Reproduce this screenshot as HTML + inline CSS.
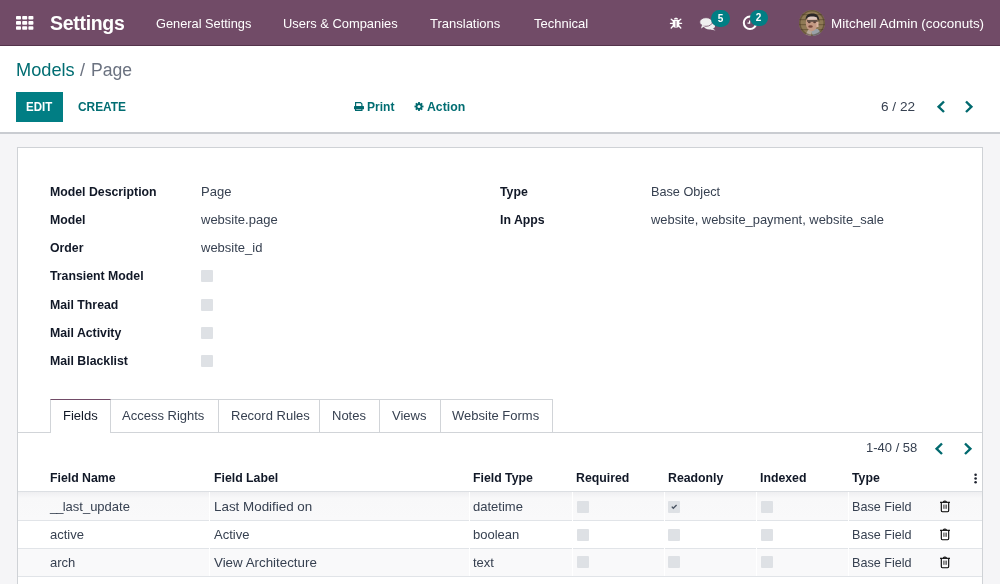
<!DOCTYPE html>
<html><head><meta charset="utf-8">
<style>
*{box-sizing:border-box;margin:0;padding:0}
html,body{width:1000px;height:584px;overflow:hidden;background:#fff;font-family:"Liberation Sans",sans-serif;color:#374151}
.a{position:absolute;white-space:nowrap;line-height:16px}
#nav{position:absolute;left:0;top:0;width:1000px;height:46px;background:#714b67;border-bottom:1px solid #54334b}
#nav .a{color:#fff;font-size:13px}
#cp{position:absolute;left:0;top:46px;width:1000px;height:87px;background:#fff}
#cpline{position:absolute;left:0;top:132px;width:1000px;height:2px;background:#c9ccd1}
#bg{position:absolute;left:0;top:134px;width:1000px;height:450px;background:#f5f5f7}
#sheet{position:absolute;left:17px;top:147px;width:966px;height:460px;background:#fff;border:1px solid #cfd2d6}
.lb{font-weight:bold;color:#111827;font-size:12.3px}
.vl{color:#374151;font-size:13px}
.cb{position:absolute;width:12px;height:12px;background:#dee1e5;border-radius:1px}
.tab{position:absolute;top:399px;height:33px;border:1px solid #d1d4d8;border-bottom:none;background:#fff}
.tt{position:absolute;z-index:2;top:408px;font-size:13px;color:#374151;white-space:nowrap;line-height:16px}
.th{font-weight:bold;color:#111827;font-size:12.3px}
.sep{position:absolute;width:1px;background:#fff}
.hl{position:absolute;left:18px;width:964px;height:1px;background:#e1e4e8}
</style></head>
<body>
<div id="root" style="position:absolute;left:0;top:0;width:1000px;height:584px;will-change:transform">
<!-- NAVBAR -->
<div id="nav">
  <svg style="position:absolute;left:16px;top:16px" width="18" height="14" viewBox="0 0 18 14">
    <g fill="#fff">
      <rect x="0" y="0" width="5" height="3.6" rx="0.8"/><rect x="6.2" y="0" width="5" height="3.6" rx="0.8"/><rect x="12.4" y="0" width="5" height="3.6" rx="0.8"/>
      <rect x="0" y="5.1" width="5" height="3.6" rx="0.8"/><rect x="6.2" y="5.1" width="5" height="3.6" rx="0.8"/><rect x="12.4" y="5.1" width="5" height="3.6" rx="0.8"/>
      <rect x="0" y="10.2" width="5" height="3.6" rx="0.8"/><rect x="6.2" y="10.2" width="5" height="3.6" rx="0.8"/><rect x="12.4" y="10.2" width="5" height="3.6" rx="0.8"/>
    </g>
  </svg>
  <div class="a" style="left:50px;top:12px;font-size:19.5px;line-height:22px;font-weight:bold;letter-spacing:-0.3px">Settings</div>
  <div class="a" style="left:156px;top:16px;font-size:12.8px">General Settings</div>
  <div class="a" style="left:283px;top:16px;font-size:12.9px">Users &amp; Companies</div>
  <div class="a" style="left:430px;top:16px">Translations</div>
  <div class="a" style="left:534px;top:16px">Technical</div>
  <!-- bug -->
  <svg style="position:absolute;left:669px;top:16px" width="14" height="14" viewBox="0 0 14 14">
    <g fill="#fff">
      <path d="M4.8 3.4 C4.8 1.2 9.2 1.2 9.2 3.4 Z"/>
      <path d="M3.7 3.9 H10.3 V9.8 C10.3 12.4 3.7 12.4 3.7 9.8 Z"/>
    </g>
    <g stroke="#fff" stroke-width="1.3" stroke-linecap="round">
      <line x1="3.6" y1="7.3" x2="1.4" y2="7.3"/><line x1="10.4" y1="7.3" x2="12.6" y2="7.3"/>
      <line x1="3.8" y1="4.6" x2="2.2" y2="3.2"/><line x1="10.2" y1="4.6" x2="11.8" y2="3.2"/>
      <line x1="3.8" y1="10.3" x2="2.2" y2="12.0"/><line x1="10.2" y1="10.3" x2="11.8" y2="12.0"/>
    </g>
    <rect x="6.4" y="5" width="1.2" height="6.4" fill="#9c7d94"/>
  </svg>
  <!-- comments -->
  <svg style="position:absolute;left:699px;top:17px" width="18" height="14" viewBox="0 0 18 14">
    <g fill="#efefef">
      <ellipse cx="10.5" cy="9.2" rx="5.5" ry="3.3"/>
      <path d="M13 11 L16.5 13.4 L11.5 12.4 Z"/>
      <ellipse cx="7" cy="5" rx="6.3" ry="4.3" stroke="#714b67" stroke-width="0.8"/>
      <path d="M3 8 L2 11.5 L6.5 8.8 Z"/>
    </g>
  </svg>
  <div style="position:absolute;left:711px;top:10px;width:19px;height:17px;border-radius:9px;background:#017e84"></div>
  <div class="a" style="left:716px;top:12px;width:9px;text-align:center;font-size:10px;font-weight:bold;line-height:14px;color:#fff">5</div>
  <!-- clock -->
  <svg style="position:absolute;left:742px;top:15px" width="16" height="16" viewBox="0 0 16 16">
    <circle cx="8" cy="7.8" r="6.2" fill="none" stroke="#fff" stroke-width="2"/>
    <path d="M7.6 5.5 V8.2 H5.5" fill="none" stroke="#fff" stroke-width="1.2"/>
  </svg>
  <div style="position:absolute;left:750px;top:10px;width:18px;height:16px;border-radius:8px;background:#017e84"></div>
  <div class="a" style="left:754px;top:11px;width:9px;text-align:center;font-size:10px;font-weight:bold;line-height:14px;color:#fff">2</div>
  <!-- avatar -->
  <svg style="position:absolute;left:799px;top:10px" width="26" height="26" viewBox="0 0 26 26">
    <defs><clipPath id="av"><circle cx="13" cy="13" r="13"/></clipPath>
    <filter id="bl" x="-10%" y="-10%" width="120%" height="120%"><feGaussianBlur stdDeviation="0.55"/></filter></defs>
    <g clip-path="url(#av)"><g filter="url(#bl)">
      <rect x="-2" y="-2" width="30" height="30" fill="#8f7a55"/>
      <rect x="-2" y="4" width="30" height="1.2" fill="#6f5d3e"/>
      <rect x="-2" y="9" width="30" height="1.2" fill="#6f5d3e"/>
      <rect x="-2" y="14" width="30" height="1.2" fill="#6f5d3e"/>
      <rect x="-2" y="19" width="30" height="1.2" fill="#6f5d3e"/>
      <path d="M14 26 L11 19 L19 19 L24 26 Z" fill="#9aa1a8"/>
      <path d="M6 26 L9 20 L13 20 L12 26 Z" fill="#b8a89a"/>
      <ellipse cx="12.8" cy="13" rx="6" ry="8.2" fill="#c49a84"/>
      <path d="M6.5 9.5 C7 4.2 11 3.5 13.5 3.6 C17.5 3.6 20.5 5.5 20.3 12 C19.6 9 17.8 7 13.5 7 C10 7 8 8 6.5 9.5 Z" fill="#2c2725"/>
      <path d="M8.6 7.5 C10 6 16 6 18 7.5 L17.8 9.5 L8.8 9.8 Z" fill="#ddc8c0"/>
      <rect x="8" y="10.3" width="10.5" height="1.3" fill="#3b3432"/>
      <ellipse cx="10.3" cy="12.2" rx="1.4" ry="1" fill="#5a4038"/>
      <ellipse cx="15.6" cy="12.2" rx="1.4" ry="1" fill="#5a4038"/>
      <ellipse cx="11.5" cy="16.5" rx="2.3" ry="1.3" fill="#7a4a3c"/>
      <rect x="17.5" y="12" width="2" height="5" fill="#d9b3a0"/>
    </g><circle cx="13" cy="13" r="12.2" fill="none" stroke="#3d2f22" stroke-opacity="0.45" stroke-width="1.6"/><g>
    </g></g>
  </svg>
  <div class="a" style="left:831px;top:16px;font-size:13.45px">Mitchell Admin (coconuts)</div>
</div>

<!-- CONTROL PANEL -->
<div id="cp">
  <div class="a" style="left:16px;top:13px;font-size:18.2px;line-height:22px;color:#016d72">Models</div>
  <div class="a" style="left:80px;top:13px;font-size:18px;line-height:22px;color:#6b7280">/</div>
  <div class="a" style="left:91px;top:13px;font-size:17.6px;line-height:22px;color:#6b7280">Page</div>
  <div style="position:absolute;left:16px;top:46px;width:47px;height:30px;background:#017e84"></div>
  <div class="a" style="left:26px;top:53px;font-size:13px;font-weight:bold;color:#fff;transform:scaleX(0.885);transform-origin:0 0">EDIT</div>
  <div class="a" style="left:78px;top:53px;font-size:13px;font-weight:bold;color:#016d72;transform:scaleX(0.915);transform-origin:0 0">CREATE</div>
  <!-- print -->
  <svg style="position:absolute;left:353px;top:55px" width="12" height="11" viewBox="0 0 12 11">
    <g fill="none" stroke="#01696e" stroke-width="1.2">
      <path d="M2.6 5 V1.6 H7.6 L8.9 2.9 V5"/>
      <path d="M2.6 8 V9.4 H8.9 V8"/>
    </g>
    <rect x="1" y="5" width="10" height="3.3" rx="0.6" fill="#01696e"/>
  </svg>
  <div class="a" style="left:367px;top:53px;font-size:13px;font-weight:bold;color:#016d72;transform:scaleX(0.925);transform-origin:0 0">Print</div>
  <!-- gear -->
  <svg style="position:absolute;left:414px;top:55px" width="10" height="10" viewBox="0 0 10 10">
    <g transform="translate(5 5.5)" fill="#01696e">
      <circle r="3.3"/>
      <rect x="-0.9" y="-4.5" width="1.8" height="9"/>
      <rect x="-0.9" y="-4.5" width="1.8" height="9" transform="rotate(45)"/>
      <rect x="-0.9" y="-4.5" width="1.8" height="9" transform="rotate(90)"/>
      <rect x="-0.9" y="-4.5" width="1.8" height="9" transform="rotate(135)"/>
      <circle r="1.5" fill="#fff"/>
    </g>
  </svg>
  <div class="a" style="left:427px;top:53px;font-size:13px;font-weight:bold;color:#016d72;transform:scaleX(0.945);transform-origin:0 0">Action</div>
  <div class="a" style="left:881px;top:53px;font-size:13.6px;word-spacing:0px;color:#374151">6 / 22</div>
  <svg style="position:absolute;left:936px;top:54px" width="10" height="14" viewBox="0 0 10 14">
    <path d="M8 1.5 L2.6 6.8 L8 12" fill="none" stroke="#01696e" stroke-width="2.4"/>
  </svg>
  <svg style="position:absolute;left:964px;top:54px" width="10" height="14" viewBox="0 0 10 14">
    <path d="M2 1.5 L7.4 6.8 L2 12" fill="none" stroke="#01696e" stroke-width="2.4"/>
  </svg>
</div>
<div id="cpline"></div>

<div id="bg"></div>
<div id="sheet"></div>

<!-- FORM FIELDS -->
<div class="a lb" style="left:50px;top:184px">Model Description</div>
<div class="a lb" style="left:50px;top:212px">Model</div>
<div class="a lb" style="left:50px;top:240px">Order</div>
<div class="a lb" style="left:50px;top:268px">Transient Model</div>
<div class="a lb" style="left:50px;top:297px">Mail Thread</div>
<div class="a lb" style="left:50px;top:325px">Mail Activity</div>
<div class="a lb" style="left:50px;top:353px">Mail Blacklist</div>

<div class="a vl" style="left:201px;top:184px">Page</div>
<div class="a vl" style="left:201px;top:212px">website.page</div>
<div class="a vl" style="left:201px;top:240px">website_id</div>
<div class="cb" style="left:201px;top:270px"></div>
<div class="cb" style="left:201px;top:299px"></div>
<div class="cb" style="left:201px;top:327px"></div>
<div class="cb" style="left:201px;top:355px"></div>

<div class="a lb" style="left:500px;top:184px">Type</div>
<div class="a lb" style="left:500px;top:212px">In Apps</div>
<div class="a vl" style="left:651px;top:184px;font-size:12.7px">Base Object</div>
<div class="a vl" style="left:651px;top:212px;font-size:12.9px">website, website_payment, website_sale</div>

<!-- TABS -->
<div style="position:absolute;left:18px;top:432px;width:964px;height:1px;background:#d1d4d8"></div>
<div class="tab" style="left:50px;width:61px;height:34px;border-top:1px solid #714b67;z-index:1"></div>
<div class="tab" style="left:110px;width:109px"></div>
<div class="tab" style="left:218px;width:102px"></div>
<div class="tab" style="left:319px;width:61px"></div>
<div class="tab" style="left:379px;width:62px"></div>
<div class="tab" style="left:440px;width:113px"></div>
<div class="tt" style="left:63px;color:#111827">Fields</div>
<div class="tt" style="left:122px">Access Rights</div>
<div class="tt" style="left:231px">Record Rules</div>
<div class="tt" style="left:332px">Notes</div>
<div class="tt" style="left:392px">Views</div>
<div class="tt" style="left:452px">Website Forms</div>

<!-- LIST PAGER -->
<div class="a" style="left:866px;top:440px;font-size:13px;color:#374151">1-40 / 58</div>
<svg style="position:absolute;left:934px;top:442px" width="10" height="14" viewBox="0 0 10 14">
  <path d="M8 1.5 L2.6 6.8 L8 12" fill="none" stroke="#01696e" stroke-width="2.4"/>
</svg>
<svg style="position:absolute;left:963px;top:442px" width="10" height="14" viewBox="0 0 10 14">
  <path d="M2 1.5 L7.4 6.8 L2 12" fill="none" stroke="#01696e" stroke-width="2.4"/>
</svg>

<!-- LIST HEADER -->
<div class="a th" style="left:50px;top:470px">Field Name</div>
<div class="a th" style="left:214px;top:470px">Field Label</div>
<div class="a th" style="left:473px;top:470px">Field Type</div>
<div class="a th" style="left:576px;top:470px">Required</div>
<div class="a th" style="left:668px;top:470px">Readonly</div>
<div class="a th" style="left:760px;top:470px">Indexed</div>
<div class="a th" style="left:852px;top:470px">Type</div>
<svg style="position:absolute;left:973px;top:473px" width="5" height="11" viewBox="0 0 5 11">
  <g fill="#1f2430"><circle cx="2.6" cy="1.7" r="1.3"/><circle cx="2.6" cy="5.5" r="1.3"/><circle cx="2.6" cy="9.3" r="1.3"/></g>
</svg>
<div class="hl" style="top:491px;background:#dcdfe3"></div>

<!-- ROWS -->
<div style="position:absolute;left:18px;top:492px;width:964px;height:28px;background:linear-gradient(#efeff1,#f8f8f9 6px,#f9f9fa)"></div>
<div class="hl" style="top:520px"></div>
<div class="hl" style="top:548px"></div>
<div style="position:absolute;left:18px;top:549px;width:964px;height:27px;background:#f9f9fa"></div>
<div class="hl" style="top:576px"></div>

<div class="sep" style="left:209px;top:492px;height:84px"></div>
<div class="sep" style="left:469px;top:492px;height:84px"></div>
<div class="sep" style="left:572px;top:492px;height:84px"></div>
<div class="sep" style="left:664px;top:492px;height:84px"></div>
<div class="sep" style="left:756px;top:492px;height:84px"></div>
<div class="sep" style="left:848px;top:492px;height:84px"></div>

<div class="a vl" style="left:50px;top:499px"><span style="letter-spacing:-0.9px">__</span>last_update</div>
<div class="a vl" style="left:214px;top:499px;font-size:13.4px">Last Modified on</div>
<div class="a vl" style="left:473px;top:499px">datetime</div>
<div class="cb" style="left:577px;top:501px"></div>
<div class="cb" style="left:668px;top:501px"><svg width="12" height="12" viewBox="0 0 12 12" style="position:absolute;left:0;top:0"><path d="M3.8 5.6 L5.3 7.3 L8.6 4" fill="none" stroke="#4b5563" stroke-width="1.4"/></svg></div>
<div class="cb" style="left:761px;top:501px"></div>
<div class="a vl" style="left:852px;top:499px;font-size:12.6px">Base Field</div>

<div class="a vl" style="left:50px;top:527px">active</div>
<div class="a vl" style="left:214px;top:527px">Active</div>
<div class="a vl" style="left:473px;top:527px">boolean</div>
<div class="cb" style="left:577px;top:529px"></div>
<div class="cb" style="left:668px;top:529px"></div>
<div class="cb" style="left:761px;top:529px"></div>
<div class="a vl" style="left:852px;top:527px;font-size:12.6px">Base Field</div>

<div class="a vl" style="left:50px;top:555px">arch</div>
<div class="a vl" style="left:214px;top:555px;font-size:13.35px">View Architecture</div>
<div class="a vl" style="left:473px;top:555px">text</div>
<div class="cb" style="left:577px;top:556px"></div>
<div class="cb" style="left:668px;top:556px"></div>
<div class="cb" style="left:761px;top:556px"></div>
<div class="a vl" style="left:852px;top:555px;font-size:12.6px">Base Field</div>

<!-- trash icons -->
<svg style="position:absolute;left:939px;top:500px" width="12" height="13" viewBox="0 0 12 13">
  <g fill="none" stroke="#000" stroke-width="1.1">
    <path d="M1 2.3 H11"/><path d="M4.6 2.2 C4.6 0.6 7.4 0.6 7.4 2.2"/>
    <path d="M2.3 2.6 V10.6 C2.3 11.3 2.8 11.7 3.4 11.7 H8.6 C9.2 11.7 9.7 11.3 9.7 10.6 V2.6"/>
  </g>
  <g fill="#333"><rect x="4.4" y="4.6" width="0.9" height="4.2"/><rect x="5.6" y="4.6" width="0.9" height="4.2" fill="#777"/><rect x="6.8" y="4.6" width="0.9" height="4.2"/></g>
</svg>
<svg style="position:absolute;left:939px;top:528px" width="12" height="13" viewBox="0 0 12 13">
  <g fill="none" stroke="#000" stroke-width="1.1">
    <path d="M1 2.3 H11"/><path d="M4.6 2.2 C4.6 0.6 7.4 0.6 7.4 2.2"/>
    <path d="M2.3 2.6 V10.6 C2.3 11.3 2.8 11.7 3.4 11.7 H8.6 C9.2 11.7 9.7 11.3 9.7 10.6 V2.6"/>
  </g>
  <g fill="#333"><rect x="4.4" y="4.6" width="0.9" height="4.2"/><rect x="5.6" y="4.6" width="0.9" height="4.2" fill="#777"/><rect x="6.8" y="4.6" width="0.9" height="4.2"/></g>
</svg>
<svg style="position:absolute;left:939px;top:556px" width="12" height="13" viewBox="0 0 12 13">
  <g fill="none" stroke="#000" stroke-width="1.1">
    <path d="M1 2.3 H11"/><path d="M4.6 2.2 C4.6 0.6 7.4 0.6 7.4 2.2"/>
    <path d="M2.3 2.6 V10.6 C2.3 11.3 2.8 11.7 3.4 11.7 H8.6 C9.2 11.7 9.7 11.3 9.7 10.6 V2.6"/>
  </g>
  <g fill="#333"><rect x="4.4" y="4.6" width="0.9" height="4.2"/><rect x="5.6" y="4.6" width="0.9" height="4.2" fill="#777"/><rect x="6.8" y="4.6" width="0.9" height="4.2"/></g>
</svg>
</div>
</body></html>
